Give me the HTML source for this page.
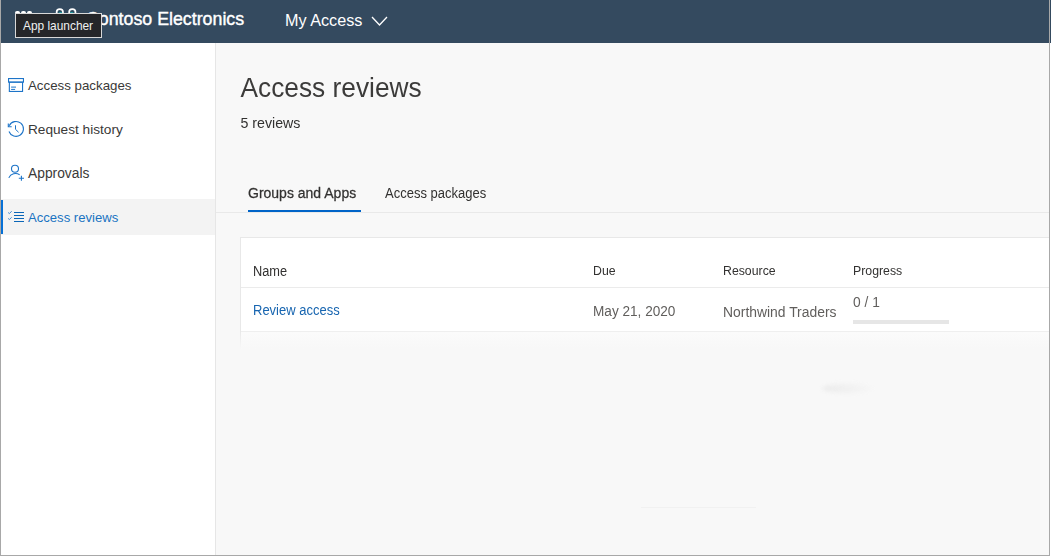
<!DOCTYPE html>
<html><head><meta charset="utf-8">
<style>
*{box-sizing:border-box;margin:0;padding:0}
html,body{width:1052px;height:556px;overflow:hidden;background:#fff;font-family:"Liberation Sans",sans-serif;}
#frame{position:absolute;left:0;top:0;width:1052px;height:556px;background:#fff;overflow:hidden}
#bl{position:absolute;left:0;top:0;width:1px;height:556px;background:#a8a8a8;z-index:5}
#br{position:absolute;left:1049px;top:0;width:1px;height:556px;background:#a8a8a8;z-index:5}
#bb{position:absolute;left:0;top:555px;width:1050px;height:1px;background:#a8a8a8;z-index:5}
.abs{position:absolute;white-space:nowrap}
#hdr{position:absolute;left:0;top:0;width:1051px;height:43px;background:#344a5f}
#side{position:absolute;left:0;top:43px;width:216px;height:512px;background:#fff;border-right:1px solid #e6e6e6}
.nav{position:absolute;left:0;width:215px;height:36px}
.nav span{position:absolute;left:28px;top:11px;font-size:13.3px;color:#3a3938}
.nav svg{position:absolute;left:8px;top:10px}
#sel{background:#f3f3f3}
#sel span{color:#1a73c2}
#selbar{position:absolute;left:1px;top:1px;width:2px;height:34px;background:#0670d6}
#main{position:absolute;left:216px;top:43px;width:833px;height:512px;background:#f8f8f8}
#card{position:absolute;left:240px;top:237px;width:809px;height:95px;background:#fff;border:1px solid #e8e8e8;border-bottom:none;border-right:none}
.th{font-size:12.3px;color:#323130;transform:scaleY(1.08);transform-origin:0 0}
.td{font-size:13.4px;color:#605e5c;transform:scaleY(1.06);transform-origin:0 0}
#tip{position:absolute;left:15px;top:13px;width:87px;height:25px;background:#252629;border:1px solid #d8d8d8;}
#tip span{position:absolute;left:7px;top:5px;font-size:11.9px;color:#f0f0f0}
</style></head><body>
<div id="frame">
  <div id="bl"></div><div id="br"></div><div id="bb"></div>
  <div id="hdr">
    <div class="abs" style="left:15px;top:11px;width:5px;height:4px;background:#fff;border-radius:2px"></div>
    <div class="abs" style="left:21px;top:11px;width:5px;height:4px;background:#fff;border-radius:2px"></div>
    <div class="abs" style="left:27px;top:11px;width:5px;height:4px;background:#fff;border-radius:2px"></div>
    <svg class="abs" style="left:54px;top:6px" width="26" height="20" viewBox="0 0 26 20">
      <circle cx="5.8" cy="6.3" r="3.2" fill="#2a4a5e" stroke="#fff" stroke-width="1.7"/>
      <circle cx="18.3" cy="6.3" r="3.2" fill="#2a4a5e" stroke="#fff" stroke-width="1.7"/>
      <ellipse cx="6.5" cy="7.6" rx="2" ry="1.3" fill="#22c0c0"/>
      <ellipse cx="17.6" cy="7.6" rx="2" ry="1.3" fill="#22c0c0"/>
    </svg>
    <span class="abs" style="left:86px;top:9px;font-size:17.8px;color:#fff;-webkit-text-stroke:0.4px #fff">Contoso Electronics</span>
    <span class="abs" style="left:285px;top:11px;font-size:16.2px;color:#fff">My Access</span>
    <svg class="abs" style="left:371px;top:15.6px" width="17" height="11" viewBox="0 0 17 11"><path d="M1 1 L8.5 9 L16 1" fill="none" stroke="#fff" stroke-width="1.3"/></svg>
  </div>
  <div id="side">
    <div class="nav" style="top:24px"><span>Access packages</span></div>
    <div class="nav" style="top:68px"><span style="font-size:13.65px">Request history</span></div>
    <div class="nav" style="top:112px"><span style="font-size:13.8px">Approvals</span></div>
    <div class="nav" id="sel" style="top:156px"><div id="selbar"></div><span style="font-size:13.1px">Access reviews</span></div>
  </div>
  <svg class="abs" style="left:0;top:0;z-index:3" width="30" height="240" viewBox="0 0 30 240">
    <g fill="none" stroke="#1d74c8" stroke-width="1.1">
      <rect x="8.55" y="78.55" width="14.9" height="3.6"/>
      <rect x="9.35" y="82.15" width="13.2" height="9.3"/>
      <path d="M11.1 87.1h4.9M11.1 89.4h4" stroke-width="1"/>
      <path d="M9.0 131.45 A7.45 7.45 0 1 0 9.25 125.75"/>
      <path d="M8.3 123.4 V126.7 H11.7"/>
      <path d="M15.5 125.3 V129.3 L18.6 132.3" stroke-width="1"/>
      <circle cx="15" cy="168.7" r="3.5"/>
      <path d="M8.8 177.9 A7.3 7.3 0 0 1 19.7 174.9"/>
      <path d="M18.8 178.25 H24 M21.4 175.8 V180.8"/>
      <path d="M14 212.5H24M14 215.5H24M14 218.5H24M14 221.5H24" stroke="#0a66b8" stroke-width="1.05"/>
      <path d="M8.1 212.5 L9.4 213.6 L11.7 211.2 M8.1 218.4 L9.4 219.5 L11.7 217.3" stroke-width="0.8"/>
    </g>
  </svg>
  <div id="main"></div>
  <span class="abs" style="left:240.5px;top:71px;font-size:26.3px;color:#3c3b3a;transform:scaleY(1.08);transform-origin:0 0">Access reviews</span>
  <span class="abs" style="left:240.5px;top:114px;font-size:14.2px;color:#323130;transform:scaleY(1.05);transform-origin:0 0">5 reviews</span>
  <span class="abs" style="left:248px;top:184px;font-size:14px;color:#323130;-webkit-text-stroke:0.25px #323130;transform:scaleY(1.06);transform-origin:0 0">Groups and Apps</span>
  <span class="abs" style="left:385px;top:185px;font-size:13px;color:#323130;transform:scaleY(1.1);transform-origin:0 0">Access packages</span>
  <div class="abs" style="left:216px;top:212px;width:833px;height:1px;background:#e9e9e9"></div>
  <div class="abs" style="left:248px;top:210px;width:113px;height:2px;background:#0064c8"></div>
  <div id="card"></div>
  <div class="abs" style="left:241px;top:287px;width:808px;height:1px;background:#ebebeb"></div>
  <span class="abs th" style="left:253px;top:263px;font-size:12.8px">Name</span>
  <span class="abs th" style="left:593px;top:263px">Due</span>
  <span class="abs th" style="left:723px;top:263px">Resource</span>
  <span class="abs th" style="left:853px;top:263px">Progress</span>
  <span class="abs td" style="left:253px;top:302px;color:#1765b0;font-size:13px">Review access</span>
  <span class="abs td" style="left:593px;top:303px;font-size:13.6px">May 21, 2020</span>
  <span class="abs td" style="left:723px;top:303px;font-size:13.9px">Northwind Traders</span>
  <span class="abs td" style="left:853px;top:294px;font-size:13.8px">0 / 1</span>
  <div class="abs" style="left:853px;top:320px;width:96px;height:4px;background:#e6e6e6"></div>
  <div class="abs" style="left:240px;top:331px;width:809px;height:18px;background:linear-gradient(#fbfbfb,#f8f8f8);border-top:1px solid #efefef"></div><div class="abs" style="left:240px;top:331px;width:1px;height:18px;background:linear-gradient(#e8e8e8,#f8f8f8)"></div>
  <div class="abs" style="left:822px;top:384px;width:50px;height:9px;border-radius:50%;background:linear-gradient(90deg,#e8e8e8,#f6f6f6);filter:blur(2px);opacity:.8"></div>
  <div class="abs" style="left:641px;top:507px;width:115px;height:1px;background:#f1f1f1"></div>
  <div id="tip"><span>App launcher</span></div>
</div>
</body></html>
